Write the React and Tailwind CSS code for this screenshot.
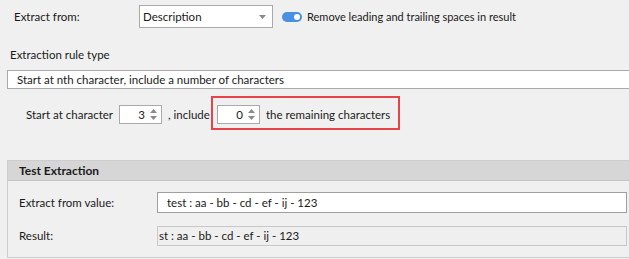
import React from "react";

function Spin({ value }) {
  return (
    <div className="flex h-[19px] w-[43px] shrink-0 items-center border border-[#a9a9a9] bg-white">
      <span className="flex-1 pr-[4px] text-right">{value}</span>
      <div className="flex w-[12px] flex-col items-center gap-[3px] pr-[3px]">
        <svg width="7" height="4" viewBox="0 0 7 4"><path d="M0 4 L3.5 0 L7 4 Z" fill="#8a8a8a" /></svg>
        <svg width="7" height="4" viewBox="0 0 7 4"><path d="M0 0 L3.5 4 L7 0 Z" fill="#8a8a8a" /></svg>
      </div>
    </div>
  );
}

export default function App() {
  return (
    <div
      className="h-[259px] w-[629px] overflow-hidden whitespace-nowrap bg-[#f0f0f0] text-[11.5px] leading-[16px] text-[#1a1a1a]"
      style={{ fontFamily: 'Lato, sans-serif' }}
    >
      <div className="box-content flex h-[23px] items-center pt-[5px]">
        <span className="ml-[14px] w-[125px]">Extract from:</span>
        <div className="flex h-[23px] w-[134px] items-center border border-[#a9a9a9] bg-white pl-[3px] pr-[6px]">
          <span className="flex-1">Description</span>
          <svg width="7" height="4" viewBox="0 0 7 4"><path d="M0 0 L3.5 4 L7 0 Z" fill="#8a8a8a" /></svg>
        </div>
        <div className="ml-[9px] flex h-[10px] w-[20px] items-center justify-end rounded-full bg-[#4a8fe2] pr-[2px]">
          <div className="h-[6px] w-[6px] rounded-full bg-white" />
        </div>
        <span className="ml-[5px] text-[11px]">Remove leading and trailing spaces in result</span>
      </div>

      <div className="ml-[10px] mt-[19px]">Extraction rule type</div>

      <div className="ml-[7px] mt-[7px] flex h-[19px] items-center border border-r-0 border-[#a9a9a9] bg-white pl-[9px]">
        Start at nth character, include a number of characters
      </div>

      <div className="ml-[26px] mt-[7px] flex h-[34px] items-start">
        <span className="mt-[11px] w-[93px]">Start at character</span>
        <div className="mt-[9px]">
          <Spin value="3" />
        </div>
        <span className="ml-[6px] mt-[11px] w-[43px]">, include</span>
        <div className="flex h-[34px] w-[189px] items-start border-2 border-[#e8424a] pl-[4px] pt-[7px]">
          <Spin value="0" />
          <span className="ml-[6px] mt-[2px]">the remaining characters</span>
        </div>
      </div>

      <div className="ml-[7px] mt-[30px] h-[98px] border border-r-0 border-[#cdcdcd]">
        <div className="flex h-[20px] items-center border-b border-[#c4c4c4] bg-[#d6d6d6] pl-[11px] text-[12px] font-bold">
          Test Extraction
        </div>
        <div className="flex items-center pt-[11px]">
          <span className="ml-[11px] w-[138px]">Extract from value:</span>
          <div className="flex h-[21px] w-[470px] items-center border border-[#a0a0a0] bg-white pl-[9px]">
            test : aa - bb - cd - ef - ij - 123
          </div>
        </div>
        <div className="flex items-center pt-[13px]">
          <span className="ml-[11px] w-[138px]">Result:</span>
          <div className="flex h-[20px] w-[470px] items-center border border-[#c8c8c8] bg-[#efefef] pl-[1px]">
            st : aa - bb - cd - ef - ij - 123
          </div>
        </div>
      </div>
    </div>
  );
}
